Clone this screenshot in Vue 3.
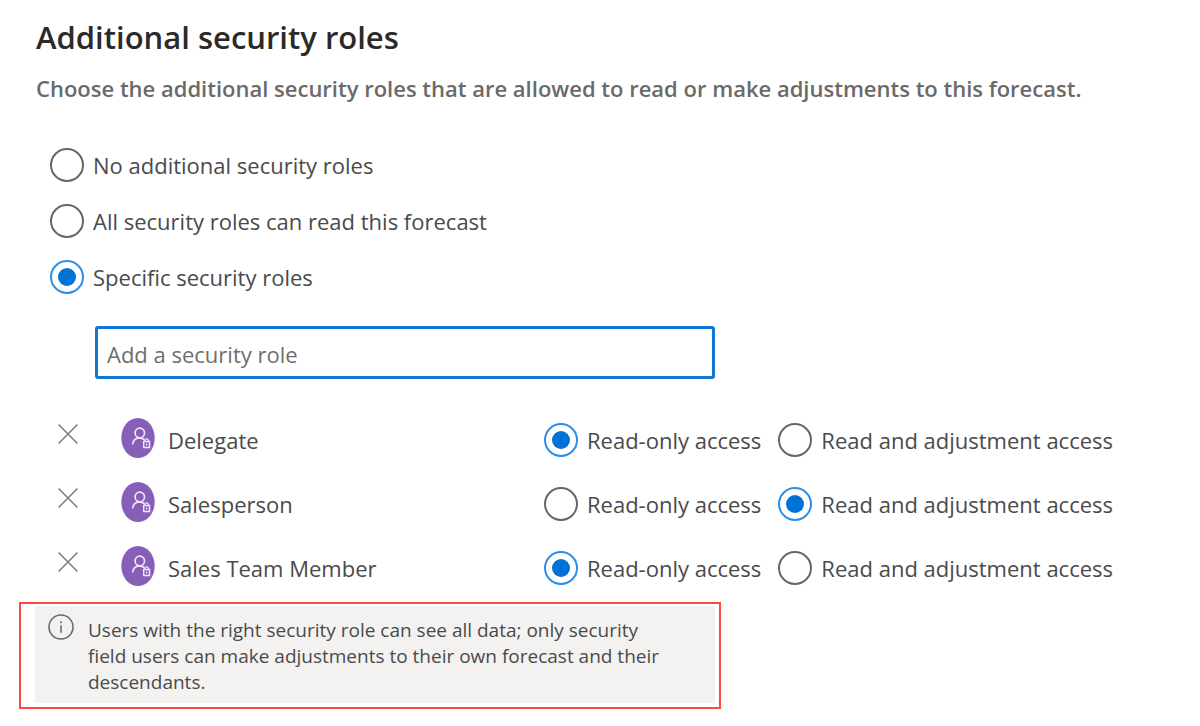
<template>
  <main class="security-page">
    <h1>Additional security roles</h1>
    <p class="subtitle">
      Choose the additional security roles that are allowed to read or make adjustments to this forecast.
    </p>

    <!-- Who can see the forecast -->
    <div class="scope-list" role="radiogroup" aria-label="Additional security roles">
      <label v-for="option in scopes" :key="option.value" class="radio">
        <input v-model="scope" type="radio" name="scope" :value="option.value">
        <span>{{ option.label }}</span>
      </label>
    </div>

    <template v-if="scope === 'specific'">
      <input
          v-model="search"
          class="role-input"
          type="text"
          placeholder="Add a security role"
          aria-label="Add a security role"
          @keydown.enter="addRole"
      >

      <!-- Selected roles -->
      <ul class="role-list">
        <li v-for="role in roles" :key="role.id" class="role">
          <button class="remove-button" type="button" :aria-label="`Remove ${role.name}`" @click="removeRole(role.id)">
            <svg viewBox="0 0 20 20" width="20" height="20">
              <path d="M0.5 0.5L19.5 19.5M19.5 0.5L0.5 19.5" fill="none" stroke="currentColor" stroke-width="1.5"/>
            </svg>
          </button>
          <svg class="avatar" viewBox="0 0 34 40" width="34" height="40" aria-hidden="true">
            <ellipse cx="17" cy="20" rx="16.7" ry="20" fill="#8660b8"/>
            <g fill="none" stroke="#efe4fb" stroke-width="1.7">
              <ellipse cx="18.8" cy="15" rx="4.7" ry="4.8"/>
              <path d="M11.6 26.5C12 22.5 14.5 19.9 18.5 19.8C20.5 19.8 22 20.5 23.2 21.7"/>
              <path d="M23.7 23.5V22.6C23.7 20.3 27.3 20.3 27.3 22.6V23.5" stroke-width="1.3"/>
              <rect x="22.7" y="23.5" width="5.8" height="6" stroke-width="1.5"/>
              <path d="M25.6 25.5V27.5" stroke-width="1.3"/>
            </g>
          </svg>
          <span class="role-name">{{ role.name }}</span>
          <div class="access" role="radiogroup" :aria-label="role.name">
            <label class="radio">
              <input v-model="role.access" type="radio" :name="`access-${role.id}`" value="read">
              <span>Read-only access</span>
            </label>
            <label class="radio">
              <input v-model="role.access" type="radio" :name="`access-${role.id}`" value="adjust">
              <span>Read and adjustment access</span>
            </label>
          </div>
        </li>
      </ul>
    </template>

    <div class="note-frame">
      <div class="note">
        <svg class="info-icon" viewBox="0 0 26 26" width="26" height="26" aria-hidden="true">
          <circle cx="13" cy="13" r="12" fill="none" stroke="currentColor" stroke-width="1.6"/>
          <path d="M13 11.2V18.8" stroke="currentColor" stroke-width="1.6"/>
          <circle cx="13" cy="8.2" r="1" fill="currentColor"/>
        </svg>
        <p>
          Users with the right security role can see all data; only security field users can make
          adjustments to their own forecast and their descendants.
        </p>
      </div>
    </div>
  </main>
</template>

<script setup>
import { ref } from 'vue';

const scope = ref('specific');
const search = ref('');

const scopes = [
  { value: 'none', label: 'No additional security roles' },
  { value: 'all', label: 'All security roles can read this forecast' },
  { value: 'specific', label: 'Specific security roles' },
];

const roles = ref([
  { id: 1, name: 'Delegate', access: 'read' },
  { id: 2, name: 'Salesperson', access: 'adjust' },
  { id: 3, name: 'Sales Team Member', access: 'read' },
]);

const addRole = () => {
  const name = search.value.trim();
  if (!name) return;

  roles.value.push({ id: Date.now(), name, access: 'read' });
  search.value = '';
};

const removeRole = (id) => {
  roles.value = roles.value.filter((role) => role.id !== id);
};
</script>

<style>
body {
  background: #fff;
}
</style>

<style scoped>
.security-page {
  padding: 15px 36px;
  font-family: "Segoe UI", "Open Sans", "Noto Sans", sans-serif;
  font-size: 22px;
  line-height: 32px;
  color: #4a4a4a;
}

h1 {
  margin: 0;
  font-size: 31px;
  font-weight: 600;
  line-height: 44px;
  color: #2b2a29;
}

.subtitle {
  margin: 13px 0 0;
  font-weight: 600;
  color: #6a6a6a;
}

.scope-list {
  display: flex;
  flex-direction: column;
  align-items: flex-start;
  gap: 22px;
  margin: 44px 0 0 14px;
}

.radio {
  display: flex;
  align-items: center;
  gap: 9px;
  height: 34px;
  white-space: nowrap;
  cursor: pointer;
}

.radio input {
  appearance: none;
  flex: none;
  display: grid;
  place-items: center;
  width: 34px;
  height: 34px;
  margin: 0;
  border: 2px solid #666;
  border-radius: 50%;
  cursor: pointer;
}

.radio input:checked {
  border-color: #2b8fe6;
}

.radio input:checked::before {
  content: "";
  width: 18px;
  height: 18px;
  border-radius: 50%;
  background: #0072d6;
}

.role-input {
  display: block;
  box-sizing: border-box;
  width: 100%;
  max-width: 620px;
  height: 53px;
  margin: 32px 0 0 59px;
  padding: 2px 9px 0;
  border: 3px solid #0f78d4;
  border-radius: 3px;
  outline: none;
  font: inherit;
  color: inherit;
}

.role-input::placeholder {
  color: #6e6e6e;
  opacity: 1;
}

.role-list {
  margin: 29px 0 2px;
  padding: 0 0 0 14px;
  list-style: none;
}

.role {
  display: grid;
  grid-template-columns: 71px 47px minmax(240px, 376px) auto;
  align-items: center;
  justify-content: start;
  height: 64px;
}

.remove-button {
  display: flex;
  justify-content: center;
  width: 36px;
  margin-bottom: 12px;
  padding: 0;
  border: none;
  background: none;
  color: #7d7b79;
  cursor: pointer;
}

.avatar {
  margin-bottom: 4px;
}

.access {
  display: flex;
  gap: 17px;
}

.note-frame {
  box-sizing: border-box;
  max-width: 702px;
  margin-left: -17px;
  padding: 2px 4px 4px 14px;
  border: 2px solid #f94a4a;
}

.note {
  display: flex;
  gap: 14px;
  padding: 8px 50px 8px 13px;
  background: #f3f2f1;
  font-size: 19px;
  line-height: 26px;
}

.note p {
  margin: 3px 0 0;
}

.info-icon {
  flex: none;
  color: #6b6b6b;
}
</style>
